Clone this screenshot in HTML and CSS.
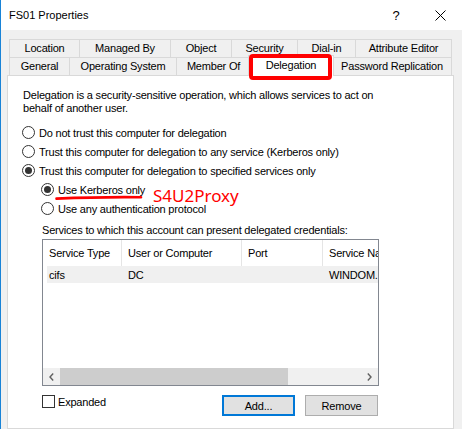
FILE: index.html
```html
<!DOCTYPE html>
<html>
<head>
<meta charset="utf-8">
<title>FS01 Properties</title>
<link rel="stylesheet" href="styles.css">
</head>
<body>
<div class="window">
  <div class="titlebar">
    <span class="title">FS01 Properties</span>
    <span class="cap-btn help">?</span>
    <span class="cap-btn close"><svg width="11" height="11" viewBox="0 0 11 11"><path d="M0.5 0.5 L10.5 10.5 M10.5 0.5 L0.5 10.5" stroke="#000" stroke-width="1"/></svg></span>
  </div>
  <div class="dialog">
    <div class="tabs">
      <div class="tabrow row1">
        <div class="tab">Location</div>
        <div class="tab">Managed By</div>
        <div class="tab">Object</div>
        <div class="tab">Security</div>
        <div class="tab">Dial-in</div>
        <div class="tab">Attribute Editor</div>
      </div>
      <div class="tabrow row2">
        <div class="tab">General</div>
        <div class="tab">Operating System</div>
        <div class="tab">Member Of</div>
        <div class="tab selected">Delegation<span class="callout"></span></div>
        <div class="tab">Password Replication</div>
      </div>
    </div>
    <div class="panel">
      <p class="desc">Delegation is a security-sensitive operation, which allows services to act on<br>behalf of another user.</p>
      <div class="options">
        <div class="radio-row"><span class="radio"></span><span>Do not trust this computer for delegation</span></div>
        <div class="radio-row"><span class="radio"></span><span>Trust this computer for delegation to any service (Kerberos only)</span></div>
        <div class="radio-row"><span class="radio checked"></span><span>Trust this computer for delegation to specified services only</span></div>
        <div class="radio-row sub"><span class="radio checked"></span><span>Use Kerberos only</span>
          <svg class="underline" width="88" height="6" viewBox="0 0 88 6"><path d="M1.5 3.6 C 25 2.6, 55 1.8, 86 2.2" fill="none" stroke="#ff0000" stroke-width="2.6" stroke-linecap="round"/></svg>
          <span class="note">S4U2Proxy</span>
        </div>
        <div class="radio-row sub"><span class="radio"></span><span>Use any authentication protocol</span></div>
      </div>
      <div class="svc-label">Services to which this account can present delegated credentials:</div>
      <div class="listview">
        <div class="lv-header">
          <div class="lv-col c1">Service Type</div>
          <div class="lv-col c2">User or Computer</div>
          <div class="lv-col c3">Port</div>
          <div class="lv-col c4">Service Name</div>
        </div>
        <div class="lv-row">
          <div class="lv-cell c1">cifs</div>
          <div class="lv-cell c2">DC</div>
          <div class="lv-cell c3"></div>
          <div class="lv-cell c4">WINDOM.LOCAL</div>
        </div>
        <div class="lv-body"></div>
        <div class="hscroll">
          <div class="sb-btn"><svg width="5" height="8" viewBox="0 0 5 8"><path d="M4.2 0.6 L1 4 L4.2 7.4" fill="none" stroke="#606060" stroke-width="1.4"/></svg></div>
          <div class="sb-thumb"></div>
          <div class="sb-track"></div>
          <div class="sb-btn"><svg width="5" height="8" viewBox="0 0 5 8"><path d="M0.8 0.6 L4 4 L0.8 7.4" fill="none" stroke="#606060" stroke-width="1.4"/></svg></div>
        </div>
      </div>
      <div class="bottom-row">
        <div class="check-row"><span class="checkbox"></span><span>Expanded</span></div>
        <div class="btn default">Add...</div>
        <div class="btn">Remove</div>
      </div>
    </div>
  </div>
</div>
</body>
</html>
```
FILE: styles.css
```css
* { box-sizing: border-box; }
html, body { margin: 0; padding: 0; }
body {
  width: 462px;
  height: 429px;
  overflow: hidden;
  background: #f0f0f0;
  font-family: "Liberation Sans", Arial, sans-serif;
  font-size: 11px;
  color: #000;
  letter-spacing: -0.2px;
}
.window {
  width: 462px;
  height: 429px;
  border-left: 1px solid #1883d7;
  display: flex;
  flex-direction: column;
  overflow: hidden;
}
.titlebar {
  height: 30px;
  flex: none;
  background: #fff;
  display: flex;
  align-items: center;
  padding-left: 8px;
}
.title { flex: 1; letter-spacing: 0; }
.cap-btn {
  width: 44px;
  height: 30px;
  display: flex;
  align-items: center;
  justify-content: center;
}
.help { font-size: 13px; letter-spacing: 0; }
.dialog {
  flex: 1;
  display: flex;
  flex-direction: column;
  padding: 9px 0 0 6px;
}
.tabs { margin-left: 2px; width: 443px; flex: none; }
.tabrow { display: grid; height: 18px; }
.row1 { grid-template-columns: 70px 91px 61px 66px 58px 97px; }
.row2 { grid-template-columns: 60px 107px 74px 82px 120px; }
.tab {
  border-top: 1px solid #d9d9d9;
  border-left: 1px solid #d9d9d9;
  display: flex;
  align-items: center;
  justify-content: center;
  white-space: nowrap;
  line-height: 17px;
}
.tab:last-child { border-right: 1px solid #d9d9d9; }
.tab.selected {
  position: relative;
  z-index: 2;
  background: #fff;
  margin: -2px -2px -1px -2px;
  border-right: 1px solid #d9d9d9;
  align-items: flex-start;
  padding-top: 1px;
}
.callout {
  position: absolute;
  left: 0;
  top: -2px;
  width: 83px;
  height: 26px;
  border: 4px solid #ff0000;
  border-radius: 4px;
}
.panel {
  flex: 1;
  width: 447px;
  background: #fff;
  border: 1px solid #d9d9d9;
  padding: 0 0 0 14px;
}
.desc {
  margin: 13px 0 0 1px;
  line-height: 13px;
  white-space: nowrap;
}
.options { margin-top: 8px; }
.radio-row {
  position: relative;
  height: 19px;
  display: flex;
  align-items: center;
  white-space: nowrap;
}
.radio-row.sub { padding-left: 19px; }
.radio {
  flex: none;
  width: 13px;
  height: 13px;
  margin-right: 4px;
  border: 1px solid #333;
  border-radius: 50%;
  background: #fff;
  display: flex;
  align-items: center;
  justify-content: center;
}
.radio.checked::after {
  content: "";
  width: 7px;
  height: 7px;
  border-radius: 50%;
  background: #333;
}
.underline {
  position: absolute;
  left: 33px;
  top: 15px;
}
.note {
  position: absolute;
  left: 131px;
  top: 9px;
  font-family: "Noto Sans", "Open Sans", sans-serif;
  font-size: 17px;
  line-height: 13px;
  letter-spacing: 0;
  color: #ff0000;
}
.svc-label {
  margin: 6px 0 0 20px;
  line-height: 13px;
  white-space: nowrap;
}
.listview {
  margin: 2px 0 0 20px;
  width: 337px;
  height: 147px;
  border: 1px solid #828790;
  display: flex;
  flex-direction: column;
  overflow: hidden;
}
.lv-header { display: flex; height: 26px; flex: none; }
.lv-col {
  flex: none;
  border-right: 1px solid #e5e5e5;
  padding-left: 6px;
  display: flex;
  align-items: center;
  white-space: nowrap;
  overflow: hidden;
}
.c1 { width: 79px; }
.c2 { width: 120px; }
.c3 { width: 81px; }
.c4 { width: 90px; }
.lv-row {
  display: flex;
  height: 17px;
  flex: none;
  margin-left: 4px;
  background: #f0f0f0;
  align-items: center;
}
.lv-cell {
  flex: none;
  padding-left: 6px;
  white-space: nowrap;
  overflow: hidden;
}
.lv-row .c1 { width: 75px; padding-left: 2px; }
.lv-body { flex: 1; }
.hscroll {
  flex: none;
  height: 17px;
  display: flex;
  background: #f0f0f0;
}
.sb-btn {
  width: 17px;
  flex: none;
  display: flex;
  align-items: center;
  justify-content: center;
}
.sb-thumb { width: 228px; flex: none; background: #cdcdcd; }
.sb-track { flex: 1; }
.bottom-row {
  margin: 9px 0 0 20px;
  width: 336px;
  display: flex;
  align-items: flex-start;
}
.check-row {
  flex: 1;
  height: 13px;
  display: flex;
  align-items: center;
}
.checkbox {
  width: 13px;
  height: 13px;
  margin-right: 3px;
  border: 1px solid #333;
  background: #fff;
}
.btn {
  width: 73px;
  height: 21px;
  flex: none;
  background: #e1e1e1;
  border: 1px solid #adadad;
  display: flex;
  align-items: center;
  justify-content: center;
}
.btn.default { border: 2px solid #0078d7; }
.btn + .btn { margin-left: 10px; }
```
